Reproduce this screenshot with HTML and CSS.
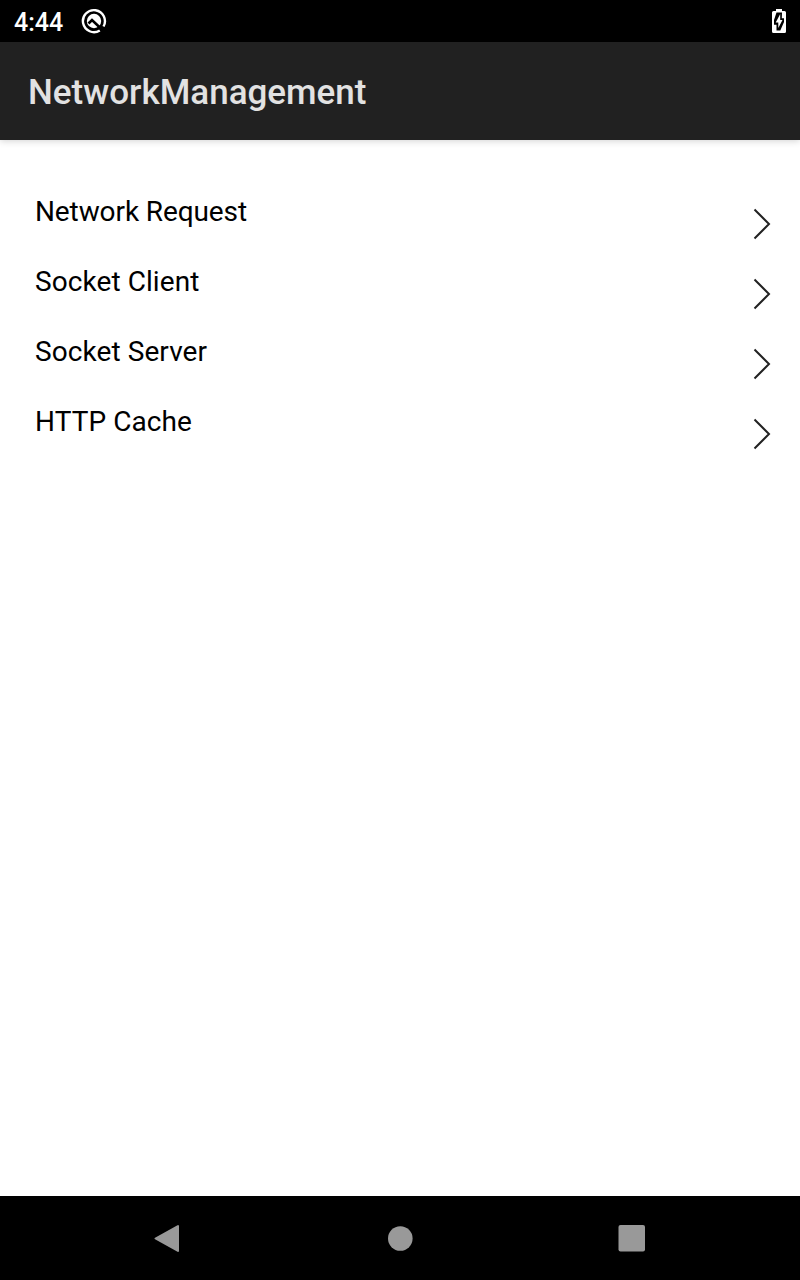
FILE: index.html
```html
<!DOCTYPE html>
<html lang="en">
<head>
<meta charset="utf-8">
<title>NetworkManagement</title>
<link rel="stylesheet" href="styles.css">
</head>
<body>
<div class="screen">
  <div class="status">
    <span class="clock">4:44</span>
    <svg class="notice" width="26" height="26" viewBox="0 0 26 26" fill="none"><path d="M18.800 22.400A11 11 0 1 1 22.500 18.500" stroke="#fff" stroke-width="2.400"/><circle cx="13" cy="13" r="7.200" fill="#fff"/><path d="M7.500 15.500L11 12L21.500 22" stroke="#000" stroke-width="2.600"/></svg>
    <svg class="battery" width="14" height="24" viewBox="0 0 14 24"><path fill="#fff" d="M4 0h6v2h2.500q1.500 0 1.500 1.500v19q0 1.500-1.500 1.500h-11q-1.500 0-1.500-1.500v-19q0-1.500 1.500-1.500h2.500z"/><path d="M4.500 3.500H10L9.800 9.200H12V13L8.300 21.500H4.500V15.800H2V11z" fill="#000"/><path d="M8.200 5L3.700 13.500H6.300V19L10.500 11H8.200z" fill="#fff"/></svg>
  </div>
  <header class="appbar"><h1 class="title">NetworkManagement</h1></header>
  <main class="list">
    <div class="row"><span class="label request">Network Request</span><svg class="chevron" width="18" height="32" viewBox="0 0 18 32"><path d="M1.500 1.500L16 16L1.500 30.500"/></svg></div>
    <div class="row"><span class="label">Socket Client</span><svg class="chevron" width="18" height="32" viewBox="0 0 18 32"><path d="M1.500 1.500L16 16L1.500 30.500"/></svg></div>
    <div class="row"><span class="label">Socket Server</span><svg class="chevron" width="18" height="32" viewBox="0 0 18 32"><path d="M1.500 1.500L16 16L1.500 30.500"/></svg></div>
    <div class="row"><span class="label">HTTP Cache</span><svg class="chevron" width="18" height="32" viewBox="0 0 18 32"><path d="M1.500 1.500L16 16L1.500 30.500"/></svg></div>
  </main>
  <nav class="navbar">
    <svg width="28" height="30" viewBox="0 0 28 30"><path d="M2.500 14.500L25 2v25z" fill="#999" stroke="#999" stroke-width="2" stroke-linejoin="round"/></svg>
    <svg width="28" height="30" viewBox="0 0 28 30"><circle cx="14.300" cy="14.500" r="12.300" fill="#999"/></svg>
    <svg width="28" height="30" viewBox="0 0 28 30"><rect x=".5" y="1" width="26.500" height="26.500" rx="2" fill="#999"/></svg>
  </nav>
</div>
</body>
</html>
```
FILE: styles.css
```css
body { margin: 0; font-family: Roboto, sans-serif; background: #fff; }
svg { display: block; flex: none; }
.screen { width: 800px; height: 1280px; display: flex; flex-direction: column; }
.status { height: 42px; background: #000; color: #fff; display: flex; align-items: center; box-sizing: border-box; padding: 0 14px; }
.clock { width: 49px; font-size: 25px; font-weight: 500; line-height: 28px; margin-top: 3px; }
.notice { margin-left: 18px; }
.battery { margin-left: auto; }
.appbar { height: 98px; background: #212121; display: flex; align-items: center; padding-left: 28px; box-shadow: 0 1px 7px rgba(0,0,0,.18); }
.title { margin: 4px 0 0; font-size: 35px; line-height: 42px; font-weight: 500; color: #e2e2e2; }
.list { flex: 1; padding: 54px 29px 0 35px; }
.row { height: 70px; display: flex; justify-content: space-between; align-items: flex-start; }
.label { margin-top: 1px; font-size: 28px; line-height: 34px; letter-spacing: .08px; color: #000; }
.request { letter-spacing: -.1px; }
.chevron { margin-top: 14px; fill: none; stroke: #222; stroke-width: 2; }
.navbar { height: 84px; background: #000; display: flex; justify-content: space-between; align-items: center; box-sizing: border-box; padding: 1px 154px 0 153px; }
```
